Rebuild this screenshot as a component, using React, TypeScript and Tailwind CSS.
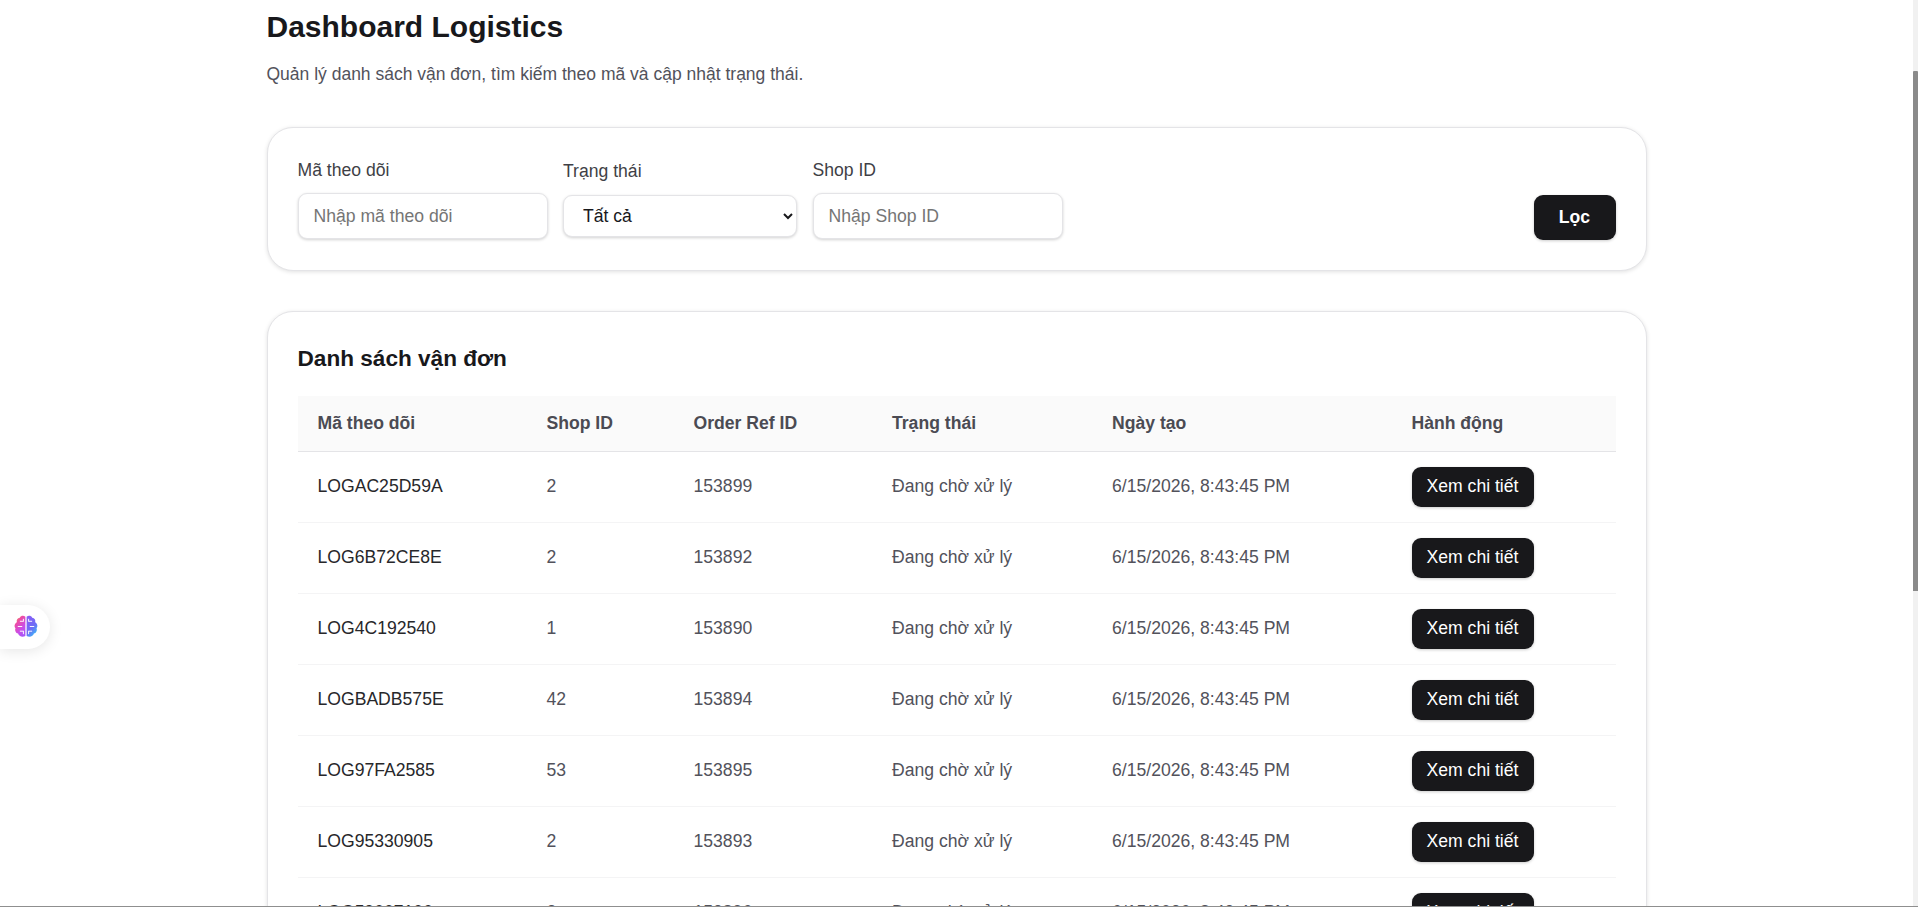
const rows = [
  ["LOGAC25D59A", "2", "153899"],
  ["LOG6B72CE8E", "2", "153892"],
  ["LOG4C192540", "1", "153890"],
  ["LOGBADB575E", "42", "153894"],
  ["LOG97FA2585", "53", "153895"],
  ["LOG95330905", "2", "153893"],
  ["LOG59007100", "2", "153896"],
];

function BrainBadge() {
  return (
    <div className="absolute left-0 top-[605px] flex h-[44px] w-[50px] items-center justify-center rounded-r-[22px] bg-white shadow-[0_2px_14px_rgba(0,0,0,0.1)]">
      <svg width="26" height="25" viewBox="0 0 24 24" className="mb-[2px] ml-[1px]">
        <defs>
          <linearGradient id="brainL" x1="0.1" y1="0" x2="0.7" y2="1">
            <stop offset="0" stopColor="#f9a03f" />
            <stop offset="0.3" stopColor="#ec4ba6" />
            <stop offset="0.7" stopColor="#c94de8" />
            <stop offset="1" stopColor="#a855f7" />
          </linearGradient>
          <linearGradient id="brainR" x1="0.1" y1="0" x2="0.7" y2="1">
            <stop offset="0" stopColor="#8b5cf6" />
            <stop offset="0.6" stopColor="#6d6cf5" />
            <stop offset="1" stopColor="#38bdf8" />
          </linearGradient>
        </defs>
        <path fill="url(#brainL)" d="M11.4 2.6C9.6 1.2 7 1.6 6 3.6 3.8 3.8 2.6 5.8 3.2 7.8 1 9 .4 11.800 1.900 13.600 1 15.800 2.200 18.200 4.400 18.800 5 21.400 8.400 22.800 11.400 21.200Z" />
        <path fill="url(#brainR)" d="M12.600 2.600C14.400 1.200 17 1.600 18 3.600 20.200 3.800 21.400 5.800 20.800 7.800 23 9 23.600 11.800 22.100 13.600 23 15.800 21.800 18.200 19.600 18.800 19 21.400 15.600 22.800 12.600 21.200Z" />
        <path fill="none" stroke="#fff" strokeWidth="0.900" strokeLinecap="round" d="M9 7H6.500M9.500 7V5M4.500 12H8M9 16.500H6.500M9.500 16.500V19M15 7H17.500M14.500 7V5M19.500 12H16M15 16.500H17.500M14.500 16.500V19" />
      </svg>
    </div>
  );
}

function Field({ label, placeholder }: { label: string; placeholder: string }) {
  return (
    <div className="mb-[1px] flex w-[250px] flex-col gap-[13px]">
      <label className="text-[17.6px] leading-[20px] text-[#3f3f46]">{label}</label>
      <input
        placeholder={placeholder}
        className="h-[46px] w-full rounded-[9px] border border-[#e4e4e7] bg-white px-[15px] text-[17.6px] shadow-[0_1px_3px_rgba(0,0,0,0.18)] outline-none placeholder:text-[#757575]"
      />
    </div>
  );
}

export default function App() {
  return (
    <div
      className="relative flex h-[907px] overflow-hidden bg-white text-[#18181b]"
      style={{ fontFamily: '"Liberation Sans", Arial, sans-serif' }}
    >
      <main className="min-w-0 flex-1">
        <div className="mx-auto w-[1380px]">
          <h1 className="pt-[9px] text-[30px] leading-[36px] font-bold">Dashboard Logistics</h1>
          <p className="mt-[19px] text-[17.5px] leading-[20px] text-[#52525b]">
            Quản lý danh sách vận đơn, tìm kiếm theo mã và cập nhật trạng thái.
          </p>

          <section className="mt-[43px] flex h-[144px] items-end justify-between rounded-[26px] border border-[#e4e4e7] bg-white px-[30px] pb-[30px] shadow-[0_1px_4px_rgba(0,0,0,0.12)]">
            <div className="flex items-end gap-[15.5px]">
              <Field label="Mã theo dõi" placeholder="Nhập mã theo dõi" />
              <div className="mb-[3px] flex w-[234px] flex-col gap-[14px]">
                <label className="text-[17.6px] leading-[20px] text-[#3f3f46]">Trạng thái</label>
                <select className="h-[42px] w-full rounded-[9px] border border-[#e4e4e7] bg-white px-[15px] text-[17.6px] shadow-[0_1px_3px_rgba(0,0,0,0.18)] outline-none">
                  <option>Tất cả</option>
                </select>
              </div>
              <Field label="Shop ID" placeholder="Nhập Shop ID" />
            </div>
            <button className="h-[45px] w-[82px] rounded-[9px] bg-[#18181b] text-[17.6px] font-bold text-white shadow-[0_1px_3px_rgba(0,0,0,0.2)]">
              Lọc
            </button>
          </section>

          <section className="mt-[40px] rounded-[26px] border border-[#e4e4e7] bg-white px-[30px] pt-[33px] shadow-[0_1px_4px_rgba(0,0,0,0.12)]">
            <h2 className="text-[22.6px] leading-[28px] font-bold">Danh sách vận đơn</h2>
            <table className="mt-[23px] w-full table-fixed border-collapse text-left text-[17.6px]">
              <thead>
                <tr className="h-[55px] border-b border-[#e4e4e7] bg-[#fafafa] text-[#4b4b53]">
                  <th className="w-[229px] pl-[20px] font-bold">Mã theo dõi</th>
                  <th className="w-[147px] pl-[20px] font-bold">Shop ID</th>
                  <th className="w-[198.5px] pl-[20px] font-bold">Order Ref ID</th>
                  <th className="w-[220px] pl-[20px] font-bold">Trạng thái</th>
                  <th className="w-[299.5px] pl-[20px] font-bold">Ngày tạo</th>
                  <th className="pl-[20px] font-bold">Hành động</th>
                </tr>
              </thead>
              <tbody className="text-[#52525b]">
                {rows.map((r) => (
                  <tr key={r[0]} className="h-[71px] border-b border-[#f4f4f5]">
                    <td className="pl-[20px] text-[#27272a]">{r[0]}</td>
                    <td className="pl-[20px]">{r[1]}</td>
                    <td className="pl-[20px]">{r[2]}</td>
                    <td className="pl-[20px]">Đang chờ xử lý</td>
                    <td className="pl-[20px]">6/15/2026, 8:43:45 PM</td>
                    <td className="pl-[20px]">
                      <button className="h-[40px] w-[122px] rounded-[9px] bg-[#18181b] text-[17.6px] text-white shadow-[0_1px_3px_rgba(0,0,0,0.2)]">
                        Xem chi tiết
                      </button>
                    </td>
                  </tr>
                ))}
              </tbody>
            </table>
          </section>
        </div>
      </main>
      <div className="h-full w-[5px] shrink-0 bg-[#f1f1f1] pt-[71px]">
        <div className="h-[520px] w-full rounded-t-[1px] bg-[#8a8a8a]" />
      </div>
      <BrainBadge />
      <div className="absolute right-0 bottom-0 left-0 h-px bg-[#8f8f8f]" />
    </div>
  );
}
